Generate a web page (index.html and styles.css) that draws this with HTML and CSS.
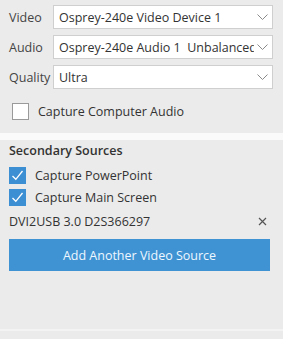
FILE: index.html
```html
<!DOCTYPE html>
<html lang="en">
<head>
    <meta charset="UTF-8">
    <meta name="viewport" content="width=device-width, initial-scale=1.0">
    <title>Capture Settings</title>
    <link rel="stylesheet" href="styles.css">
</head>
<body>
    <div class="panel sources">
        <div class="field">
            <label for="video">Video</label>
            <div class="select-wrap">
                <select id="video">
                    <option>Osprey-240e Video Device 1</option>
                </select>
                <svg class="chevron" width="18" height="22" viewBox="0 0 18 22"><path d="M3.5 8.5 L8.5 13.5 L13.5 8.5" fill="none" stroke="#8a8a8a" stroke-width="1"/></svg>
            </div>
        </div>
        <div class="field">
            <label for="audio">Audio</label>
            <div class="select-wrap">
                <select id="audio">
                    <option>Osprey-240e Audio 1&nbsp; Unbalanced</option>
                </select>
                <svg class="chevron" width="18" height="22" viewBox="0 0 18 22"><path d="M3.5 8.5 L8.5 13.5 L13.5 8.5" fill="none" stroke="#8a8a8a" stroke-width="1"/></svg>
            </div>
        </div>
        <div class="field">
            <label for="quality">Quality</label>
            <div class="select-wrap">
                <select id="quality">
                    <option>Ultra</option>
                </select>
                <svg class="chevron" width="18" height="22" viewBox="0 0 18 22"><path d="M3.5 8.5 L8.5 13.5 L13.5 8.5" fill="none" stroke="#8a8a8a" stroke-width="1"/></svg>
            </div>
        </div>
        <label class="check computer-audio">
            <span class="box"></span>
            Capture Computer Audio
        </label>
    </div>

    <div class="panel secondary">
        <h2>Secondary Sources</h2>
        <label class="check">
            <span class="box checked">
                <svg width="17" height="17" viewBox="0 0 17 17"><path d="M3.5 9 L6.8 12.3 L13.5 4" fill="none" stroke="#fff" stroke-width="1.3"/></svg>
            </span>
            Capture PowerPoint
        </label>
        <label class="check">
            <span class="box checked">
                <svg width="17" height="17" viewBox="0 0 17 17"><path d="M3.5 9 L6.8 12.3 L13.5 4" fill="none" stroke="#fff" stroke-width="1.3"/></svg>
            </span>
            Capture Main Screen
        </label>
        <div class="device">
            <span>DVI2USB 3.0 D2S366297</span>
            <svg class="remove" width="9" height="9" viewBox="0 0 9 9"><path d="M1 1 L8 8 M8 1 L1 8" stroke="#555" stroke-width="1.2"/></svg>
        </div>
        <button type="button">Add Another Video Source</button>
    </div>
</body>
</html>
```

FILE: styles.css
```css
body {
    margin: 0;
    padding: 0;
    font-family: 'Open Sans', 'Noto Sans', sans-serif;
    font-size: 12.5px;
    color: #333;
    background-color: #ebebeb;
}

.panel {
    background-color: #ebebeb;
}

.sources {
    padding: 5px 10px 0 9px;
    height: 128px;
    border-bottom: 7px solid #fafafa;
}

.field {
    display: grid;
    grid-template-columns: 44px 1fr;
    align-items: center;
    height: 24px;
    margin-bottom: 6px;
}

.field label {
    font-size: 12.5px;
    color: #444;
}

.select-wrap {
    position: relative;
    height: 24px;
}

.select-wrap select {
    appearance: none;
    -webkit-appearance: none;
    width: 100%;
    height: 24px;
    margin: 0;
    padding: 0 16px 0 5px;
    border: 1px solid #cfcfcf;
    border-radius: 0;
    background: #fff;
    font-family: inherit;
    font-size: 12.5px;
    color: #333;
    outline: none;
}

.chevron {
    position: absolute;
    right: 1px;
    top: 1px;
    background: #fff;
    pointer-events: none;
}

.check {
    display: flex;
    align-items: center;
    gap: 9px;
    height: 22px;
    color: #333;
}

.computer-audio {
    margin-top: 11px;
    padding-left: 3px;
}

.box {
    width: 15px;
    height: 15px;
    border: 1px solid #9a9a9a;
    background: #fff;
    flex: none;
}

.box.checked {
    width: 17px;
    height: 17px;
    border: none;
    background: #3d8fd3;
}

.box svg {
    display: block;
}

.secondary {
    padding: 2px 13px 0 9px;
    height: 187px;
    border-bottom: 2px solid #f3f3f3;
}

.secondary h2 {
    margin: 0 0 4px;
    height: 18px;
    line-height: 18px;
    font-size: 12.5px;
    font-weight: 600;
    color: #333;
}

.device {
    display: flex;
    justify-content: space-between;
    align-items: center;
    height: 22px;
    margin-top: 2px;
}

.remove {
    margin-right: 3px;
}

button {
    display: block;
    width: 100%;
    height: 32px;
    margin-top: 7px;
    border: none;
    background-color: #3f93d3;
    color: #eef7ff;
    font-family: inherit;
    font-size: 12.5px;
}
```
